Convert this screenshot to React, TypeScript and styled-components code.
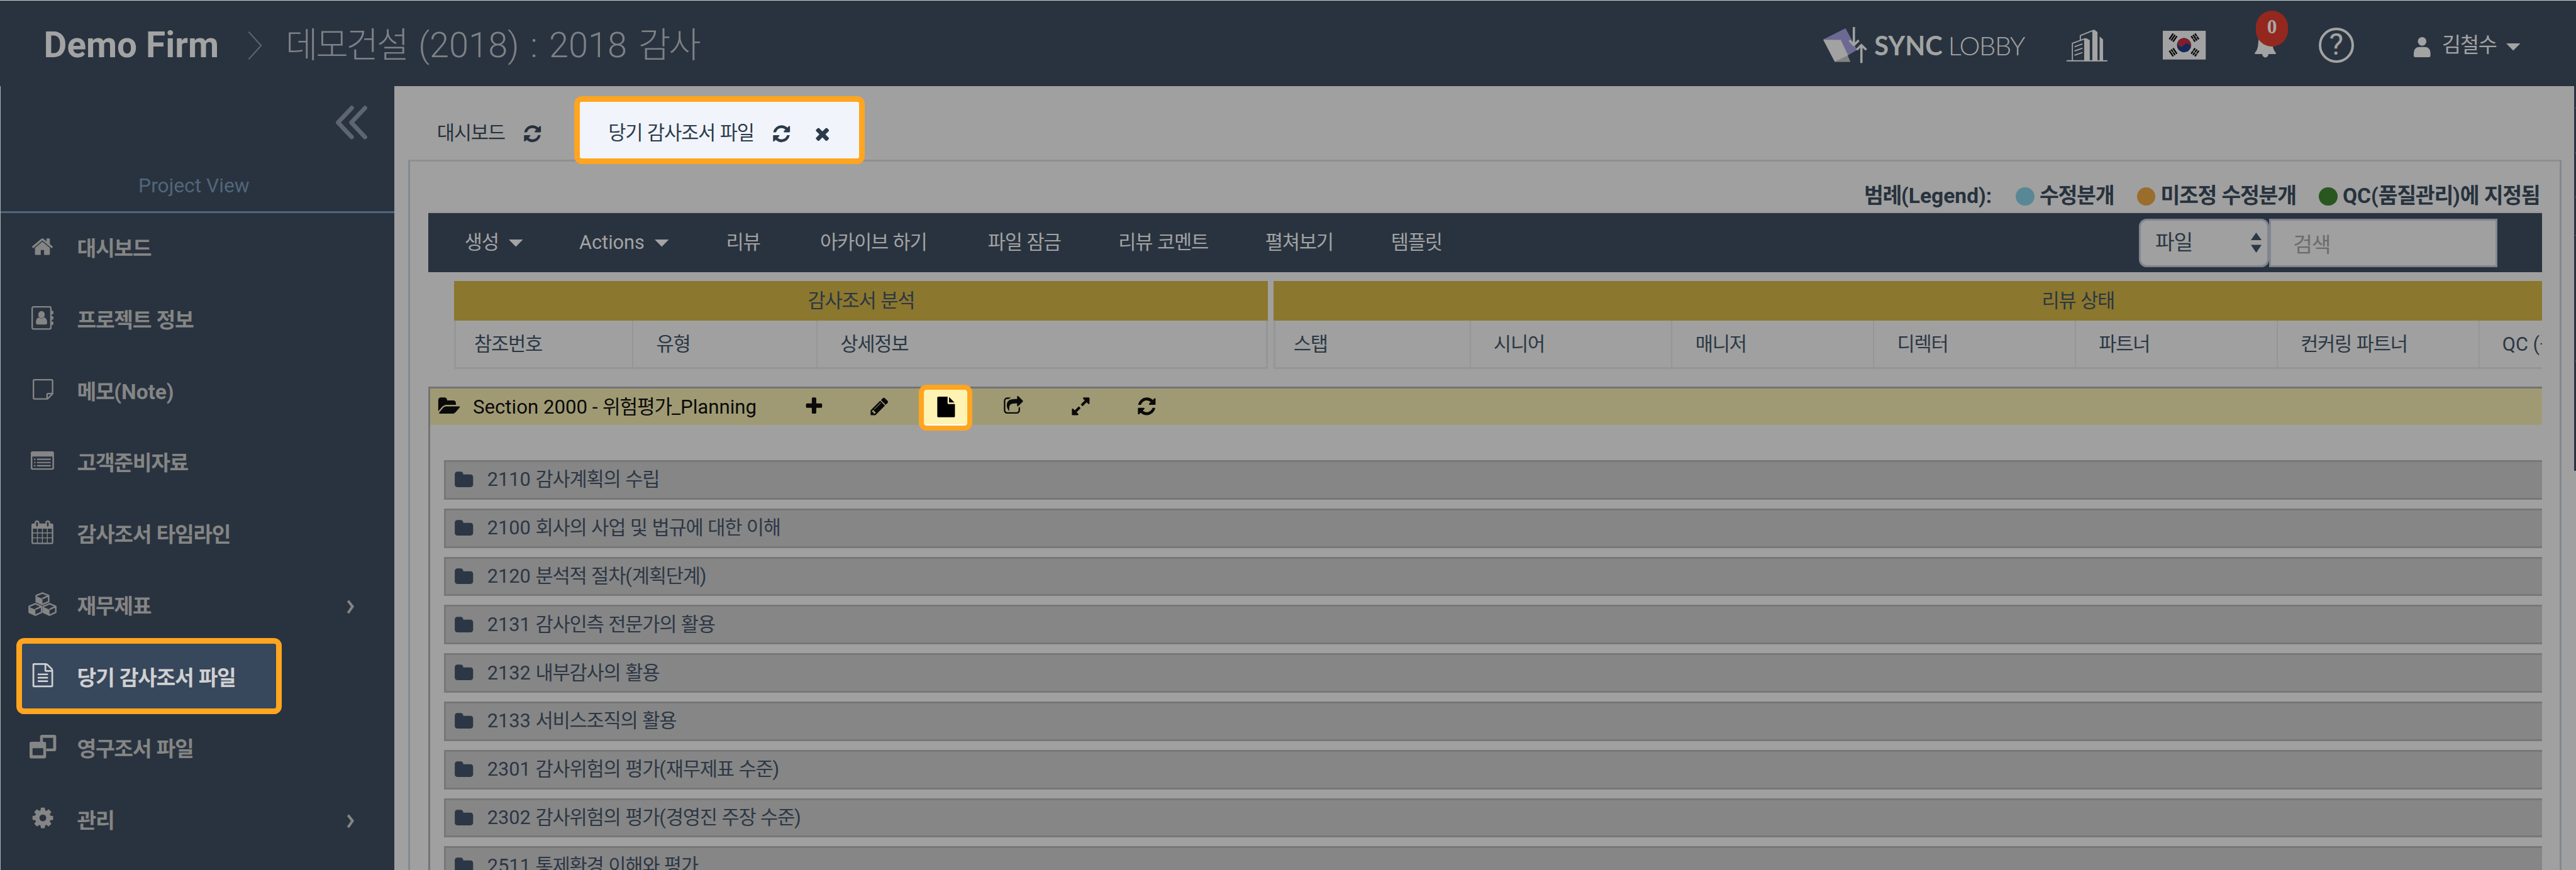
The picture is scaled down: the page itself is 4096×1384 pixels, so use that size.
import React from "react";
import styled, { createGlobalStyle, css } from "styled-components";

/* Design units: the layout is specified on a 6001-unit wide canvas. */
const u = (n: number) => `${+((n * 4096) / 6001).toFixed(2)}px`;
/* Borders are drawn on whole pixels. */
const b = (n: number) => `${Math.round((n * 4096) / 6001)}px`;

const c = {
  navy: "#29333f",
  page: "#a0a0a0",
  line: "#969696",
  orange: "#ffa51f",
  ink: "#2b3744",
  light: "#a3a3a3",
  slate: "#52667a",
  gold: "#8b772e",
  straw: "#a09a74",
};

const Global = createGlobalStyle`
  *, *::before { box-sizing: border-box; }
  body { margin: 0; background: ${c.page}; }
  ul { list-style: none; margin: 0; padding: 0; }
`;

/* ---------- text ---------- */

const Hangul = styled.span`
  letter-spacing: -0.04em;
`;

const Text = ({ children }: { children: string }) => (
  <span>
    {children.split(/([\uac00-\ud7a3]+)/).map((run, i) => (i % 2 ? <Hangul key={i}>{run}</Hangul> : run))}
  </span>
);

/* ---------- icons ---------- */

const Svg = styled.svg<{ $w: number; $h?: number }>`
  display: block;
  flex: none;
  width: ${(p) => u(p.$w)};
  height: ${(p) => u(p.$h ?? p.$w)};
  fill: currentColor;
  overflow: visible;
`;

const glyphs = {
  refresh:
    "M1639 1056q0 5-1 7-64 268-268 434.5t-478 166.5q-146 0-282.5-55t-243.5-157l-129 129q-19 19-45 19t-45-19-19-45v-448q0-26 19-45t45-19h448q26 0 45 19t19 45-19 45l-137 137q71 66 161 102t187 36q134 0 250-65t186-179q11-17 53-117 8-23 30-23h192q13 0 22.5 9.5t9.5 22.5zm25-800v448q0 26-19 45t-45 19h-448q-26 0-45-19t-19-45 19-45l138-138q-148-137-349-137-134 0-250 65t-186 179q-11 17-53 117-8 23-30 23h-199q-13 0-22.5-9.5t-9.5-22.5v-7q65-268 270-434.5t480-166.5q146 0 284 55.5t245 156.5l130-129q19-19 45-19t45 19 19 45z",
  times:
    "M1490 1322q0 40-28 68l-136 136q-28 28-68 28t-68-28l-294-294-294 294q-28 28-68 28t-68-28l-136-136q-28-28-28-68t28-68l294-294-294-294q-28-28-28-68t28-68l136-136q28-28 68-28t68 28l294 294 294-294q28-28 68-28t68 28l136 136q28 28 28 68t-28 68l-294 294 294 294q28 28 28 68z",
  home: "M1472 992v480q0 26-19 45t-45 19h-384v-384h-256v384h-384q-26 0-45-19t-19-45v-480q0-1 .5-3t.5-3l575-474 575 474q1 2 1 6zm223-69l-62 74q-8 9-21 11h-3q-13 0-21-7l-692-577-692 577q-12 8-24 7-13-2-21-11l-62-74q-8-10-7-23.5t11-21.5l719-599q32-26 76-26t76 26l244 204v-195q0-14 9-23t23-9h192q14 0 23 9t9 23v408l219 182q10 8 11 21.5t-7 23.5z",
  plus: "M1600 736v192q0 40-28 68t-68 28h-416v416q0 40-28 68t-68 28h-192q-40 0-68-28t-28-68v-416h-416q-40 0-68-28t-28-68v-192q0-40 28-68t68-28h416v-416q0-40 28-68t68-28h192q40 0 68 28t28 68v416h416q40 0 68 28t28 68z",
  pencil:
    "M491 1536l91-91-235-235-91 91v107h128v128h107zm523-928q0-22-22-22-10 0-17 7l-542 542q-7 7-7 17 0 22 22 22 10 0 17-7l542-542q7-7 7-17zm-54-192l416 416-832 832h-416v-416zm683 96q0 53-37 90l-166 166-416-416 166-165q36-38 90-38 53 0 91 38l235 234q37 39 37 91z",
  file: "M1152 512v-472q22 14 36 28l408 408q14 14 28 36h-472zm-128 32q0 40 28 68t68 28h544v1056q0 40-28 68t-68 28h-1344q-40 0-68-28t-28-68v-1600q0-40 28-68t68-28h800v544z",
  share:
    "M1472 989v259q0 119-84.5 203.5t-203.5 84.5h-832q-119 0-203.5-84.5t-84.5-203.5v-832q0-119 84.5-203.5t203.5-84.5h255q13 0 22.5 9.5t9.5 22.5q0 27-26 32-77 26-133 60-10 4-16 4h-112q-66 0-113 47t-47 113v832q0 66 47 113t113 47h832q66 0 113-47t47-113v-214q0-19 18-29 28-13 54-37 16-16 35-8 21 9 21 29zm237-496l-384 384q-18 19-45 19-12 0-25-5-39-17-39-59v-192h-160q-323 0-438 131-119 137-74 473 3 23-20 34-8 2-12 2-16 0-26-13-10-14-21-31t-39.5-68.5-49.5-99.5-38.5-114-17.5-122q0-49 3.5-91t14-90 28-88 47-81.5 68.5-74 94.5-61.5 124.5-48.5 159.5-30.5 196.5-11h160v-192q0-42 39-59 13-5 25-5 26 0 45 19l384 384q19 19 19 45t-19 45z",
  expand:
    "M883 1056q0 13-10 23l-332 332 144 144q19 19 19 45t-19 45-45 19h-448q-26 0-45-19t-19-45v-448q0-26 19-45t45-19 45 19l144 144 332-332q10-10 23-10t23 10l114 114q10 10 10 23zm781-864v448q0 26-19 45t-45 19-45-19l-144-144-332 332q-10 10-23 10t-23-10l-114-114q-10-10-10-23t10-23l332-332-144-144q-19-19-19-45t19-45 45-19h448q26 0 45 19t19 45z",
  folderOpen:
    "M1815 952q0 31-31 66l-336 396q-43 51-120.5 86.5t-143.5 35.5h-1088q-34 0-60.5-13t-26.5-43q0-31 31-66l336-396q43-51 120.5-86.5t143.5-35.5h1088q34 0 60.5 13t26.5 43zm-343-344v160h-832q-94 0-197 47.5t-164 119.5l-337 396-5 6q0-4-.5-12.5t-.5-12.5v-960q0-92 66-158t158-66h320q92 0 158 66t66 158v32h544q92 0 158 66t66 158z",
  folder:
    "M1728 608v704q0 92-66 158t-158 66h-1216q-92 0-158-66t-66-158v-960q0-92 66-158t158-66h320q92 0 158 66t66 158v32h672q92 0 158 66t66 158z",
  cog: "M1152 896q0-106-75-181t-181-75-181 75-75 181 75 181 181 75 181-75 75-181zm512-109v222q0 12-8 23t-20 13l-185 28q-19 54-39 91 35 50 107 138 10 12 10 25t-9 23q-27 37-99 108t-94 71q-12 0-26-9l-138-108q-44 23-91 38-16 136-29 186-7 28-36 28h-222q-14 0-24.5-8.5t-11.5-21.5l-28-184q-49-16-90-37l-141 107q-10 9-25 9-14 0-25-11-126-114-165-168-7-10-7-23 0-12 8-23 15-21 51-66.5t54-70.5q-27-50-41-99l-183-27q-13-2-21-12.5t-8-23.5v-222q0-12 8-23t19-13l186-28q14-46 39-92-40-57-107-138-10-12-10-24 0-10 9-23 26-36 98.5-107.5t94.5-71.5q13 0 26 10l138 107q44-23 91-38 16-136 29-186 7-28 36-28h222q14 0 24.5 8.5t11.5 21.5l28 184q49 16 90 37l142-107q9-9 24-9 13 0 25 10 129 119 165 170 7 8 7 22 0 12-8 23-15 21-51 66.5t-54 70.5q26 50 41 98l183 28q13 2 21 12.5t8 23.5z",
  fileText:
    "M1596 380q28 28 48 76t20 88v1152q0 40-28 68t-68 28h-1344q-40 0-68-28t-28-68v-1600q0-40 28-68t68-28h896q40 0 88 20t76 48zm-444-244v376h376q-10-29-22-41l-313-313q-12-12-41-22zm384 1528v-1024h-416q-40 0-68-28t-28-68v-416h-768v1536h1280zm-1024-864q0-14 9-23t23-9h704q14 0 23 9t9 23v64q0 14-9 23t-23 9h-704q-14 0-23-9t-9-23v-64zm736 224q14 0 23 9t9 23v64q0 14-9 23t-23 9h-704q-14 0-23-9t-9-23v-64q0-14 9-23t23-9h704zm0 256q14 0 23 9t9 23v64q0 14-9 23t-23 9h-704q-14 0-23-9t-9-23v-64q0-14 9-23t23-9h704z",
};

const Glyph = ({ name, size }: { name: keyof typeof glyphs; size: number }) => (
  <Svg $w={size} viewBox="0 0 1792 1792">
    <path d={glyphs[name]} />
  </Svg>
);

const AddressBook = () => (
  <Svg $w={51} $h={55} viewBox="0 0 51 55">
    <rect x="1.7" y="1.7" width="43.6" height="51.6" rx="3" fill="none" stroke="currentColor" strokeWidth="3.4" />
    <path d="M46 11h3.5q1.5 0 1.5 1.5v5q0 1.5-1.5 1.5h-3.5zM46 23.5h3.5q1.5 0 1.5 1.5v5q0 1.5-1.5 1.5h-3.5zM46 36h3.5q1.5 0 1.5 1.5v5q0 1.5-1.5 1.5h-3.5z" />
    <ellipse cx="23.5" cy="20" rx="7.5" ry="8.5" />
    <path d="M10.5 38q0-9.5 6.5-11.5 6.5 5 13 0 6.5 2 6.5 11.5 0 5-4.5 5h-17q-4.5 0-4.5-5z" />
  </Svg>
);

const Note = () => (
  <Svg $w={48} $h={48} viewBox="0 0 48 48">
    <path
      d="M4 1.7H44Q46.3 1.7 46.3 4V34.5L34.5 46.3H4Q1.7 46.3 1.7 44V4Q1.7 1.7 4 1.7ZM46 34H36Q33.5 34 33.5 36.5V46"
      fill="none"
      stroke="currentColor"
      strokeWidth="3.4"
    />
  </Svg>
);

const ListAlt = () => (
  <Svg $w={54} $h={43} viewBox="0 0 54 43">
    <path
      fillRule="evenodd"
      d="M4 0H50Q54 0 54 4V39Q54 43 50 43H4Q0 43 0 39V4Q0 0 4 0ZM3.600 12V38.500Q3.600 39.600 5 39.600H49Q50.400 39.600 50.400 38.500V12Z"
    />
    <path d="M7.500 17h3.400v3h-3.400zM7.500 24.500h3.400v3h-3.400zM7.500 32h3.400v3h-3.400zM14.500 17h32v3h-32zM14.500 24.500h32v3h-32zM14.500 32h32v3h-32z" />
  </Svg>
);

const Calendar = () => (
  <Svg $w={51} $h={55} viewBox="0 0 51 55">
    <path
      fillRule="evenodd"
      d="M4 7H7.500V5Q7.500 0 13 0Q18.500 0 18.500 5V7H32.500V5Q32.500 0 38 0Q43.500 0 43.500 5V7H47Q51 7 51 11V51Q51 55 47 55H4Q0 55 0 51V11Q0 7 4 7ZM11 5V12Q11 14 13 14Q15 14 15 12V5Q15 3.500 13 3.500Q11 3.500 11 5ZM36 5V12Q36 14 38 14Q40 14 40 12V5Q40 3.500 38 3.500Q36 3.500 36 5ZM3.500 19V28H13V19ZM15 19V28H24.500V19ZM26.500 19V28H36V19ZM38 19V28H47.500V19ZM3.500 30V39.500H13V30ZM15 30V39.500H24.500V30ZM26.500 30V39.500H36V30ZM38 30V39.500H47.500V30ZM3.500 41.500V51.500H13V41.500ZM15 41.500V51.500H24.500V41.500ZM26.500 41.500V51.500H36V41.500ZM38 41.500V51.500H47.500V41.500Z"
    />
  </Svg>
);

const Cubes = () => (
  <Svg $w={66} $h={55} viewBox="0 0 66 55">
    {[
      [33, 0],
      [16.5, 25],
      [49.5, 25],
    ].map(([x, y]) => (
      <g key={`${x}`} transform={`translate(${x} ${y})`}>
        <path
          d="M0 2L14.500 8V22L0 28.500L-14.500 22V8ZM0 15L14 8.500"
          fill="none"
          stroke="currentColor"
          strokeWidth="3.6"
          strokeLinejoin="round"
        />
        <path d="M-15 9.500L0 15.500V29.500L-15 23Z" />
      </g>
    ))}
  </Svg>
);

const Windows = () => (
  <Svg $w={62} $h={55} viewBox="0 0 62 55">
    <path
      fillRule="evenodd"
      d="M29 0H58Q62 0 62 4V34Q62 38 58 38H39V32H55V7H31V16H24.500V4Q24.500 0 29 0ZM4 16H34Q38.500 16 38.500 20V51Q38.500 55 34 55H4Q0 55 0 51V20Q0 16 4 16ZM7 31V47.500H32V31Z"
    />
  </Svg>
);

const ChevronRight = () => (
  <Svg $w={19} $h={30} viewBox="0 0 19 30">
    <path d="M3.500 1L14 14.500L3.500 29.500" fill="none" stroke="currentColor" strokeWidth="6" />
  </Svg>
);

const Collapse = () => (
  <Svg $w={76} $h={76} viewBox="0 0 76 76">
    <path
      d="M40 4L8 38L40 72M71 4L39 38L71 72"
      fill="none"
      stroke="currentColor"
      strokeWidth="10"
      strokeLinecap="round"
      strokeLinejoin="round"
    />
  </Svg>
);

const Caret = () => (
  <Svg $w={33} $h={17} viewBox="0 0 33 17">
    <path d="M0 0H33L16.500 17Z" />
  </Svg>
);

const SyncMark = () => (
  <Svg $w={103} $h={84} viewBox="0 0 103 84">
    <path d="M0 29L52 3L79 53L58 66Z" fill="#6c6a93" />
    <path d="M27 81.500L57 66L63.500 81.500Z" fill="#828282" />
    <path d="M0 29.500L41 30L58 66L27 81.500Z" fill="#a2a2a2" />
    <path
      d="M71.500 0V41M61 31L71.500 42L83 31M89 84V43M78 53L89 42L100.500 53"
      fill="none"
      stroke="#a2a2a2"
      strokeWidth="5.2"
    />
  </Svg>
);

const Building = () => (
  <Svg $w={95} $h={75} viewBox="0 0 95 75">
    <path d="M0 71.500H95V74.500H0ZM41 21L46 20L54 25V72H41ZM60 3L64 0L72 6V72H60ZM77 16L85 23V72H77Z" />
    <path
      d="M13.500 72V32L43 21.500M32 25V14L62 2M18.500 40L37 33.500M18.500 50L37 43.500M18.500 60L37 53.500"
      fill="none"
      stroke="currentColor"
      strokeWidth="2.6"
    />
  </Svg>
);

const Trigram = ({ x, y, angle, broken }: { x: number; y: number; angle: number; broken: number[] }) => (
  <g transform={`translate(${x} ${y}) rotate(${angle})`}>
    {[-5.2, 0, 5.2].map((dy, i) => (
      <g key={dy}>
        <rect x="-8" y={dy - 1.8} width="16" height="3.6" fill="#0a0a0a" />
        {broken.includes(i) && <rect x="-0.7" y={dy - 1.8} width="1.4" height="3.6" fill="#a0a0a0" />}
      </g>
    ))}
  </g>
);

const KoreaFlag = () => (
  <Svg $w={100} $h={67} viewBox="0 0 100 67">
    <rect width="100" height="67" fill="#a2a2a2" />
    <g transform="rotate(33 49.5 33.5)">
      <circle cx="49.5" cy="33.5" r="16.5" fill="#14285a" />
      <path
        d="M33 33.500A16.500 16.500 0 0 1 66 33.500A8.250 8.250 0 0 0 49.500 33.500A8.250 8.250 0 0 1 33 33.500Z"
        fill="#7e1f2a"
      />
    </g>
    <Trigram x={24} y={16} angle={-56} broken={[]} />
    <Trigram x={75} y={16} angle={56} broken={[0, 2]} />
    <Trigram x={24} y={50} angle={56} broken={[1]} />
    <Trigram x={75} y={50} angle={-56} broken={[0, 1, 2]} />
  </Svg>
);

const Bell = () => (
  <Svg $w={50} $h={58} viewBox="0 0 50 58">
    <path d="M25 0Q41 3 41.500 24Q42 39 49 46Q51 50 47 50H3Q-1 50 1 46Q8 39 8.500 24Q9 3 25 0ZM17.500 50H32.500Q31 58 25 58Q19 58 17.500 50Z" />
  </Svg>
);

const Person = () => (
  <Svg $w={39} $h={47} viewBox="0 0 39 47">
    <circle cx="19.5" cy="10" r="10" />
    <path d="M0 40Q0 23 13 23H26Q39 23 39 40V43Q39 47 35 47H4Q0 47 0 43Z" />
  </Svg>
);

const SelectArrows = () => (
  <Svg $w={25} $h={47} viewBox="0 0 25 47">
    <path d="M0 17.500L12.500 0L25 17.500ZM0 28.500H25L12.500 47Z" />
  </Svg>
);

/* ---------- shell ---------- */

const Shell = styled.div`
  width: 4096px;
  height: 1384px;
  overflow: hidden;
  display: flex;
  flex-direction: column;
  background: ${c.page};
  color: ${c.ink};
  font-family: Roboto, "Noto Sans CJK KR", sans-serif;
  font-size: ${u(45)};
  line-height: 1.2;
  white-space: nowrap;
`;

const Header = styled.header`
  flex: none;
  height: ${u(201)};
  padding: ${u(9)} ${u(129)} 0 ${u(102)};
  display: flex;
  align-items: center;
  background: ${c.navy};
  color: ${c.light};
  border-top: 1px solid #c9d3d0;
`;

const Firm = styled.strong`
  width: ${u(475)};
  font-size: ${u(83)};
  font-weight: 700;
`;

const Crumb = styled.div`
  margin-left: ${u(54)};
  font-size: ${u(82)};
  font-weight: 300;
  word-spacing: 0.075em;
  color: #7e8186;
  ${Hangul} { letter-spacing: -0.056em; }
`;

const Slot = styled.div<{ $before: number; $w: number; $drop?: number }>`
  position: relative;
  flex: none;
  display: flex;
  align-items: center;
  width: ${(p) => u(p.$w)};
  margin-left: ${(p) => u(p.$before)};
  padding-top: ${(p) => u(p.$drop ?? 0)};
`;

const Brand = styled.div`
  flex: none;
  display: flex;
  align-items: center;
  width: ${u(479)};
  margin-left: auto;
  gap: ${u(16)};
  font-family: Lato, sans-serif;
  font-size: ${u(61)};
  color: ${c.light};
`;

const BrandName = styled.span`
  display: flex;
  gap: ${u(13)};
  font-weight: 700;
  padding-top: ${u(3)};
`;

const BrandThin = styled.span`
  font-weight: 300;
  letter-spacing: -0.035em;
`;

const Badge = styled.span`
  position: absolute;
  left: ${u(3)};
  top: ${u(-52)};
  width: ${u(75)};
  height: ${u(83)};
  padding-bottom: ${u(6)};
  border-radius: ${u(40)};
  display: flex;
  align-items: center;
  justify-content: center;
  background: #94281f;
  color: #a8a8a8;
  font: 700 ${u(46)} "Liberation Serif", serif;
`;

const Help = styled.span`
  width: ${u(83)};
  height: ${u(83)};
  border: ${b(6)} solid currentColor;
  border-radius: 50%;
  display: flex;
  align-items: center;
  justify-content: center;
  font-size: ${u(70)};
  line-height: 1;
`;

const UserName = styled.span`
  font-size: ${u(48)};
`;

const Body = styled.div`
  flex: 1;
  min-height: 0;
  display: flex;
`;

/* ---------- sidebar ---------- */

const Sidebar = styled.nav`
  flex: none;
  width: ${u(918)};
  background: ${c.navy};
  color: #858585;
  border-left: 1px solid #a9b1b1;
`;

const SidebarTop = styled.div`
  height: ${u(296)};
  border-bottom: ${b(4)} solid ${c.slate};
  display: flex;
  flex-direction: column;
  color: ${c.slate};
`;

const CollapseRow = styled.div`
  display: flex;
  justify-content: flex-end;
  padding: ${u(46)} ${u(62)} 0 0;
  color: #5d6570;
`;

const ViewName = styled.div`
  margin-top: ${u(83)};
  padding-right: ${u(16)};
  text-align: center;
  font-size: ${u(46.5)};
`;

const Item = styled.li<{ $active?: boolean }>`
  position: relative;
  height: ${u(166.6)};
  padding: ${u(1)} ${u(92)} 0 0;
  display: flex;
  align-items: center;
  font-size: ${u(49)};
  font-weight: 700;
  ${(p) =>
    p.$active &&
    css`
      z-index: 1;
      color: #d0d0d0;
      &::before {
        content: "";
        position: absolute;
        z-index: -1;
        left: ${u(36.5)};
        top: ${u(-9)};
        width: ${u(619)};
        height: ${u(177)};
        border: ${b(12.5)} solid ${c.orange};
        border-radius: ${u(18)};
        background: #37475c;
      }
    `}
`;

const ItemIcon = styled.span`
  width: ${u(66)};
  margin: 0 ${u(47)} ${u(13)} ${u(65)};
  display: flex;
  justify-content: center;
`;

const ItemArrow = styled.span`
  margin-left: auto;
`;

/* ---------- main ---------- */

const Main = styled.main`
  position: relative;
  flex: 1;
  min-width: 0;
  display: flex;
  flex-direction: column;
  padding: 0 ${u(33)};
`;

const EdgeBar = styled.div`
  position: absolute;
  right: 0;
  top: 0;
  width: ${b(4)};
  height: ${u(896)};
  display: flex;
  flex-direction: column;
  align-items: flex-end;
  background: ${c.navy};
`;

const Tick = styled.i<{ $gap: number }>`
  width: 1px;
  height: 1px;
  margin-top: ${(p) => u(p.$gap)};
  background: #8b9096;
`;

const Tabs = styled.div`
  flex: none;
  height: ${u(171)};
  padding-top: ${u(23)};
  display: flex;
  align-items: flex-start;
`;

const Tab = styled.div<{ $active?: boolean }>`
  position: relative;
  display: flex;
  align-items: center;
  flex: none;
  height: ${u(158)};
  padding-top: ${u(17)};
  color: #26313d;
  ${(p) =>
    p.$active
      ? css`
          z-index: 1;
          width: ${u(677)};
          padding-left: ${u(66)};
          border: ${b(13)} solid ${c.orange};
          border-radius: ${u(18)};
          background: #f1f4fa;
          color: #2c3b4b;
        `
      : css`
          width: ${u(387)};
          padding-left: ${u(67)};
        `}
`;

const TabIcon = styled.span<{ $before: number }>`
  margin-left: ${(p) => u(p.$before)};
`;

const Panel = styled.section`
  flex: 1;
  min-height: 0;
  border: ${b(4)} solid #82898f;
  border-top-color: #8f8f8f;
  border-bottom: 0;
  padding: 0 ${u(42)};
  display: flex;
  flex-direction: column;
`;

const Legend = styled.div`
  flex: none;
  height: ${u(121)};
  padding: ${u(46)} 0 0 ${u(3345)};
  border-bottom: ${b(4)} solid #99999b;
  display: grid;
  grid-template-columns: ${[354, 282, 424, 480].map(u).join(" ")};
  align-items: center;
  font-size: ${u(49.2)};
  font-weight: 700;
  color: #27323d;
`;

const LegendItem = styled.span`
  display: flex;
  align-items: center;
  gap: ${u(12)};
`;

const Dot = styled.i<{ $color: string }>`
  flex: none;
  width: ${u(43)};
  height: ${u(43)};
  border-radius: 50%;
  background: ${(p) => p.$color};
`;

const Toolbar = styled.div`
  flex: none;
  height: ${u(137)};
  padding-left: ${u(85)};
  padding-right: ${u(104)};
  display: flex;
  align-items: center;
  background: ${c.navy};
  color: ${c.light};
`;

const Menu = styled.div`
  display: grid;
  grid-template-columns: ${[267, 342, 219, 391, 304, 342, 293, 200].map(u).join(" ")};
  padding-top: ${u(2)};
`;

const MenuItem = styled.span`
  display: flex;
  align-items: center;
  gap: ${u(23)};
`;

const Select = styled.div`
  margin-left: auto;
  width: ${u(304)};
  height: ${u(112.5)};
  padding: 0 ${u(14)} 0 ${u(34)};
  border: ${b(5)} solid #7f868f;
  border-radius: ${u(18)};
  display: flex;
  align-items: center;
  justify-content: space-between;
  background: ${c.page};
  color: ${c.ink};
  font-size: ${u(49)};
`;

const Search = styled.div`
  width: ${u(531)};
  height: ${u(112.5)};
  padding: ${u(10)} 0 0 ${u(51)};
  border: ${b(5)} solid #7f868f;
  display: flex;
  align-items: center;
  background: ${c.page};
  color: #6c6c6c;
  font-size: ${u(49)};
`;

const Groups = styled.div`
  flex: none;
  display: flex;
  gap: ${u(12.7)};
  margin: ${u(21)} 0 0 ${u(61)};
  height: ${u(204)};
  overflow: hidden;
`;

const Group = styled.div<{ $w: number }>`
  flex: none;
  width: ${(p) => u(p.$w)};
`;

const GroupTitle = styled.div`
  height: ${u(92)};
  padding-top: ${u(3)};
  display: flex;
  align-items: center;
  justify-content: center;
  background: ${c.gold};
`;

const Cells = styled.div`
  height: ${u(112)};
  display: flex;
  border: ${b(4)} solid ${c.line};
  border-top: 0;
`;

const Cell = styled.div<{ $w: number }>`
  flex: none;
  width: ${(p) => u(p.$w)};
  padding: ${u(4)} 0 0 ${u(53)};
  display: flex;
  align-items: center;
  border-right: ${b(3)} solid ${c.line};
  &:first-child { padding-left: ${u(42)}; }
  &:last-child { border-right: 0; }
`;

const Section = styled.section`
  flex: none;
  margin-top: ${u(42)};
  border-left: ${b(4)} solid #717376;
  border-top: ${b(4)} solid #717376;
`;

const SectionHead = styled.div`
  height: ${u(84)};
  padding-left: ${u(21)};
  display: flex;
  align-items: center;
  background: ${c.straw};
  color: #0a0a0a;
`;

const SectionTitle = styled.span`
  width: ${u(733)};
  margin-left: ${u(31)};
  padding-top: ${u(2)};
  font-size: ${u(45.7)};
`;

const Action = styled.span<{ $after: number; $active?: boolean }>`
  position: relative;
  flex: none;
  width: ${u(124)};
  height: ${u(107)};
  margin-right: ${(p) => u(p.$after)};
  display: flex;
  align-items: center;
  justify-content: center;
  ${(p) =>
    p.$active &&
    css`
      z-index: 1;
      margin-top: ${u(6)};
      padding-bottom: ${u(5)};
      padding-left: ${u(3)};
      border: ${b(12)} solid ${c.orange};
      border-radius: ${u(18)};
      background: linear-gradient(#fff3b4 96.5%, #fff 96.5%);
      color: #000;
    `}
`;

const Rows = styled.ul`
  padding: ${u(83)} 0 0 ${u(33)};
`;

const Row = styled.li`
  height: ${u(92)};
  margin-bottom: ${u(20.5)};
  padding: ${u(1)} 0 0 ${u(19)};
  display: flex;
  align-items: center;
  gap: ${u(31)};
  border: ${b(4)} solid #777;
  border-right: 0;
  background: #868686;
  color: #2c3745;
`;

/* ---------- data ---------- */

const nav = [
  { label: "대시보드", icon: <Glyph name="home" size={54} /> },
  { label: "프로젝트 정보", icon: <AddressBook /> },
  { label: "메모(Note)", icon: <Note /> },
  { label: "고객준비자료", icon: <ListAlt /> },
  { label: "감사조서 타임라인", icon: <Calendar /> },
  { label: "재무제표", icon: <Cubes />, more: true },
  { label: "당기 감사조서 파일", icon: <Glyph name="fileText" size={56} />, active: true },
  { label: "영구조서 파일", icon: <Windows /> },
  { label: "관리", icon: <Glyph name="cog" size={56} />, more: true },
];

const menu = ["생성", "Actions", "리뷰", "아카이브 하기", "파일 잠금", "리뷰 코멘트", "펼쳐보기", "템플릿"];

const reviewers = ["스탭", "시니어", "매니저", "디렉터", "파트너", "컨커링 파트너", "QC (품질관리)", ""];

const actions = [
  { name: "plus", after: 28.5 },
  { name: "pencil", after: 29.5 },
  { name: "file", after: 34 },
  { name: "share", after: 32.5 },
  { name: "expand", after: 31 },
  { name: "refresh", after: 0 },
] as const;

const files = [
  "2110 감사계획의 수립",
  "2100 회사의 사업 및 법규에 대한 이해",
  "2120 분석적 절차(계획단계)",
  "2131 감사인측 전문가의 활용",
  "2132 내부감사의 활용",
  "2133 서비스조직의 활용",
  "2301 감사위험의 평가(재무제표 수준)",
  "2302 감사위험의 평가(경영진 주장 수준)",
  "2511 통제환경 이해와 평가",
];

const tickGaps = [50, 103, 101, 88, 292];

export default function App() {
  return (
    <Shell>
      <Global />
      <Header>
        <Firm>Demo Firm</Firm>
        <Svg $w={34} $h={66} viewBox="0 0 34 66">
          <path d="M2 1L31 33L2 65" fill="none" stroke="#5d6570" strokeWidth="3" />
        </Svg>
        <Crumb>
          <Text>데모건설 (2018) : 2018 감사</Text>
        </Crumb>
        <Brand>
          <SyncMark />
          <BrandName>
            SYNC <BrandThin>LOBBY</BrandThin>
          </BrandName>
        </Brand>
        <Slot $before={88} $w={95}>
          <Building />
        </Slot>
        <Slot $before={130} $w={100}>
          <KoreaFlag />
        </Slot>
        <Slot $before={113} $w={80}>
          <Bell />
          <Badge>0</Badge>
        </Slot>
        <Slot $before={69} $w={83}>
          <Help>?</Help>
        </Slot>
        <Slot $before={139} $w={39} $drop={7}>
          <Person />
        </Slot>
        <Slot $before={27} $w={132}>
          <UserName>
            <Text>김철수</Text>
          </UserName>
        </Slot>
        <Slot $before={18} $w={33} $drop={8}>
          <Caret />
        </Slot>
      </Header>
      <Body>
        <Sidebar>
          <SidebarTop>
            <CollapseRow>
              <Collapse />
            </CollapseRow>
            <ViewName>Project View</ViewName>
          </SidebarTop>
          <ul>
            {nav.map((n) => (
              <Item key={n.label} $active={n.active}>
                <ItemIcon>{n.icon}</ItemIcon>
                <Text>{n.label}</Text>
                {n.more && (
                  <ItemArrow>
                    <ChevronRight />
                  </ItemArrow>
                )}
              </Item>
            ))}
          </ul>
        </Sidebar>
        <Main>
          <Tabs>
            <Tab>
              <Text>대시보드</Text>
              <TabIcon $before={41}>
                <Glyph name="refresh" size={46} />
              </TabIcon>
            </Tab>
            <Tab $active>
              <Text>당기 감사조서 파일</Text>
              <TabIcon $before={42}>
                <Glyph name="refresh" size={46} />
              </TabIcon>
              <TabIcon $before={49}>
                <Glyph name="times" size={46} />
              </TabIcon>
            </Tab>
          </Tabs>
          <Panel>
            <Legend>
              <Text>범례(Legend):</Text>
              <LegendItem>
                <Dot $color="#588896" />
                <Text>수정분개</Text>
              </LegendItem>
              <LegendItem>
                <Dot $color="#9a6d2c" />
                <Text>미조정 수정분개</Text>
              </LegendItem>
              <LegendItem>
                <Dot $color="#29571f" />
                <Text>QC(품질관리)에 지정됨</Text>
              </LegendItem>
            </Legend>
            <Toolbar>
              <Menu>
                {menu.map((m, i) => (
                  <MenuItem key={m}>
                    <Text>{m}</Text>
                    {i < 2 && <Caret />}
                  </MenuItem>
                ))}
              </Menu>
              <Select>
                <Text>파일</Text>
                <SelectArrows />
              </Select>
              <Search>
                <Text>검색</Text>
              </Search>
            </Toolbar>
            <Groups>
              <Group $w={1896}>
                <GroupTitle>
                  <Text>감사조서 분석</Text>
                </GroupTitle>
                <Cells>
                  <Cell $w={413}>
                    <Text>참조번호</Text>
                  </Cell>
                  <Cell $w={429}>
                    <Text>유형</Text>
                  </Cell>
                  <Cell $w={1046}>
                    <Text>상세정보</Text>
                  </Cell>
                </Cells>
              </Group>
              <Group $w={3748}>
                <GroupTitle>
                  <Text>리뷰 상태</Text>
                </GroupTitle>
                <Cells>
                  {reviewers.map((r, i) => (
                    <Cell key={i} $w={i ? 470 : 455}>
                      <Text>{r}</Text>
                    </Cell>
                  ))}
                </Cells>
              </Group>
            </Groups>
            <Section>
              <SectionHead>
                <Glyph name="folderOpen" size={48} />
                <SectionTitle>
                  <Text>Section 2000 - 위험평가_Planning</Text>
                </SectionTitle>
                {actions.map((a) => (
                  <Action key={a.name} $after={a.after} $active={a.name === "file"}>
                    <Glyph name={a.name} size={48} />
                  </Action>
                ))}
              </SectionHead>
              <Rows>
                {files.map((f) => (
                  <Row key={f}>
                    <Glyph name="folder" size={46} />
                    <Text>{f}</Text>
                  </Row>
                ))}
              </Rows>
            </Section>
          </Panel>
          <EdgeBar>
            {tickGaps.map((g) => (
              <Tick key={g} $gap={g} />
            ))}
          </EdgeBar>
        </Main>
      </Body>
    </Shell>
  );
}
